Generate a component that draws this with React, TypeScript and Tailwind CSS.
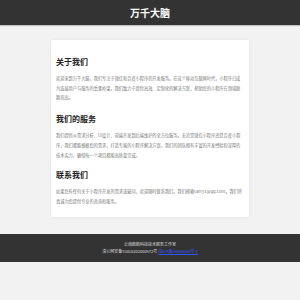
import React from "react";

const font = { fontFamily: '"Noto Sans CJK SC", "Noto Sans", sans-serif' };

export default function App() {
  return (
    <div className="min-h-[300px] bg-[#f2f2f2]" style={font}>
      <header className="flex h-[25px] items-center justify-center bg-[#333333] shadow-[0_1px_1px_rgba(0,0,0,0.2)]">
        <h1 className="text-[10px] font-bold leading-[10px] text-white">万千大脑</h1>
      </header>
      <main className="pt-[15px]">
        <div className="mx-auto w-[198px] bg-white px-[5px] pb-[10px] pt-[17px] shadow-[0_0_3px_rgba(0,0,0,0.08)]">
          <h2 className="text-[8px] font-bold leading-[10px] text-[#222]">关于我们</h2>
          <p className="mt-[7px] text-[4.2px] leading-[9.7px] text-[#777]">
            欢迎来到万千大脑，我们专注于微信和百度小程序的开发服务。在这个移动互联网时代，小程序已成为连接用户与服务的重要桥梁。我们致力于提供高效、定制化的解决方案，帮助您的小程序在领域脱颖而出。
          </p>
          <h2 className="mt-[11px] text-[8px] font-bold leading-[10px] text-[#222]">我们的服务</h2>
          <p className="mt-[7px] text-[4.2px] leading-[9.7px] text-[#777]">
            我们提供从需求分析、UI设计、前端开发到后端维护的全方位服务。无论是微信小程序还是百度小程序，我们都能根据您的需求，打造专属的小程序解决方案。我们的团队拥有丰富的开发经验和深厚的技术实力，确保每一个项目都能高质量完成。
          </p>
          <h2 className="mt-[10px] text-[8px] font-bold leading-[10px] text-[#222]">联系我们</h2>
          <p className="mt-[7px] text-[4.2px] leading-[9.7px] text-[#777]">
            如果您有任何关于小程序开发的需求或疑问，欢迎随时联系我们。我们邮箱carry1@qq.com。我们将真诚为您提供专业的咨询和服务。
          </p>
        </div>
      </main>
      <footer className="mt-[17px] bg-[#333333] py-[7px] text-center text-[4px] leading-[7px] text-[#dddddd]">
        <p>云南欧欧科技技术服务工作室</p>
        <p>
          滇公网安备53010202000572号{" "}
          <a href="#" className="text-[#3355ff] underline">滇ICP备19000000号-1</a>
        </p>
      </footer>
    </div>
  );
}
